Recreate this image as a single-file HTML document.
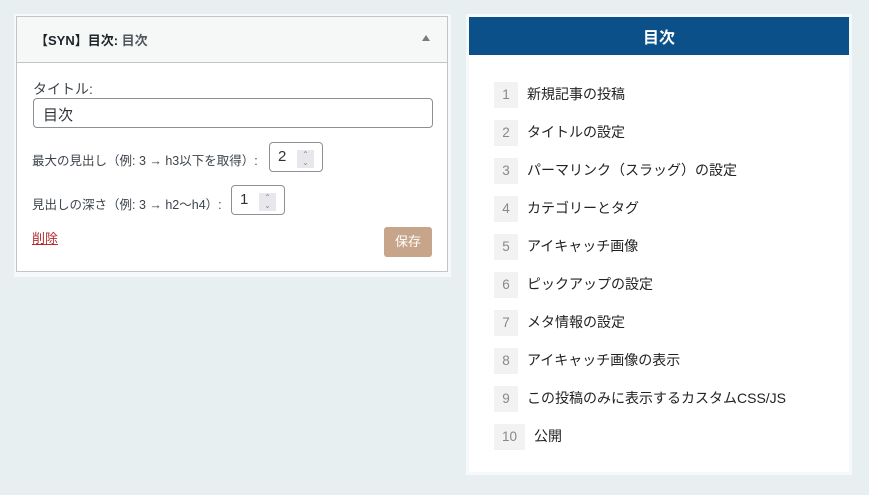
<!DOCTYPE html>
<html><head><meta charset="utf-8"><style>
*{box-sizing:border-box;margin:0;padding:0}
body{width:869px;height:495px;background:#e8eff1;font-family:"Liberation Sans","Noto Sans CJK JP",sans-serif;position:relative;overflow:hidden;color:#1d2327}
.lo{position:absolute;left:14px;top:14px;width:437px;height:263px;background:#f6f9fa}
.lw{position:absolute;left:16px;top:16px;width:432px;height:256px;background:#fff;border:1px solid #c3c4c7}
.lh{height:46px;background:#f6f7f7;border-bottom:1px solid #c3c4c7;font-size:13px;font-weight:bold;padding:13px 0 0 18px;position:relative}
.lh span{color:#50575e}
.tri{position:absolute;right:17px;top:18px;width:0;height:0;border-left:4px solid transparent;border-right:4px solid transparent;border-bottom:6px solid #787c82}
.t{position:absolute;font-size:13px;color:#3c434a}
.inp{position:absolute;border:1px solid #8c8f94;border-radius:4px;background:#fff;font-size:15px;color:#2c3338}
.sp{position:absolute;top:7px;width:17px;height:18px;background:#e8e8ec;color:#8a8a90;font-size:8px;line-height:8px;text-align:center;padding-top:1px}
.ro{position:absolute;left:466px;top:14px;width:386px;height:461px;background:#f6f9fb}
.rw{position:absolute;left:469px;top:17px;width:380px;height:455px;background:#fff}
.rh{height:38px;background:#0b5089;color:#fff;font-weight:bold;font-size:16px;text-align:center;line-height:38px;padding-top:3px}
.it{position:absolute;left:25px;height:26px;font-size:14px;line-height:26px;color:#222}
.n{display:inline-block;width:24px;height:26px;background:#f2f2f2;color:#888;text-align:center;margin-right:9px;font-size:13.5px}
</style></head><body>
<div class="lo"></div>
<div class="lw">
<div class="lh">【SYN】目次: <span>目次</span><div class="tri"></div></div>
<div class="t" style="left:16px;top:62px;font-size:14px">タイトル:</div>
<div class="inp" style="left:16px;top:81px;width:400px;height:30px;padding:5px 9px">目次</div>
<div class="t" style="left:15px;top:133px;font-size:12.5px">最大の見出し（例: 3 → h3以下を取得）:</div>
<div class="inp" style="left:252px;top:125px;width:54px;height:30px;padding:5px 8px">2<div class="sp" style="left:27px">⌃<br>⌄</div></div>
<div class="t" style="left:15px;top:177px;font-size:12.5px">見出しの深さ（例: 3 → h2〜h4）:</div>
<div class="inp" style="left:214px;top:168px;width:54px;height:30px;padding:5px 8px">1<div class="sp" style="left:27px">⌃<br>⌄</div></div>
<div class="t" style="left:15px;top:211px;color:#b32d2e;text-decoration:underline">削除</div>
<div style="position:absolute;left:367px;top:210px;width:48px;height:30px;background:#c6a58a;border-radius:3px;color:#fff;font-size:13px;text-align:center;line-height:30px">保存</div>
</div>
<div class="ro"></div>
<div class="rw">
<div class="rh">目次</div>
<div class="it" style="top:64px"><span class="n">1</span>新規記事の投稿</div>
<div class="it" style="top:102px"><span class="n">2</span>タイトルの設定</div>
<div class="it" style="top:140px"><span class="n">3</span>パーマリンク（スラッグ）の設定</div>
<div class="it" style="top:178px"><span class="n">4</span>カテゴリーとタグ</div>
<div class="it" style="top:216px"><span class="n">5</span>アイキャッチ画像</div>
<div class="it" style="top:254px"><span class="n">6</span>ピックアップの設定</div>
<div class="it" style="top:292px"><span class="n">7</span>メタ情報の設定</div>
<div class="it" style="top:330px"><span class="n">8</span>アイキャッチ画像の表示</div>
<div class="it" style="top:368px"><span class="n">9</span>この投稿のみに表示するカスタムCSS/JS</div>
<div class="it" style="top:406px"><span class="n" style="width:31px">10</span>公開</div>
</div>
</body></html>
